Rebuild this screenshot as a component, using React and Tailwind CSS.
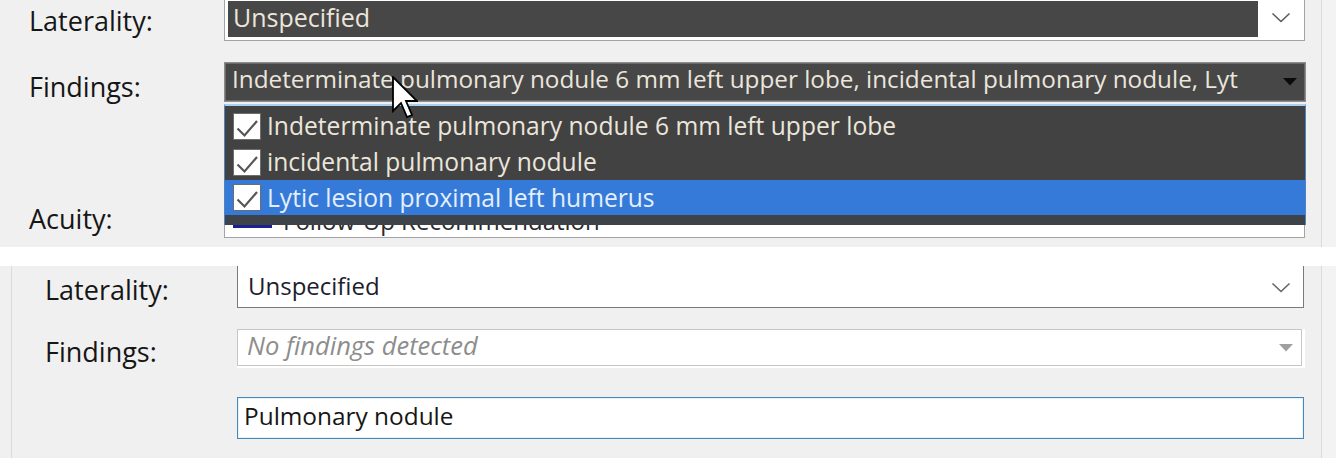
import React from "react";

const font = "font-['Open_Sans','Liberation_Sans',sans-serif]";

const Chevron = ({ color = "#5c5c5c" }) => (
  <svg width="20" height="11" viewBox="0 0 20 11">
    <path d="M1.5 1.5 L10 9.5 L18.5 1.5" fill="none" stroke={color} strokeWidth="1.6" />
  </svg>
);

const Triangle = ({ color }) => (
  <svg width="14" height="8" viewBox="0 0 14 8">
    <path d="M0 0 H14 L7 7.5 Z" fill={color} />
  </svg>
);

const CheckBox = () => (
  <div className="w-[28px] h-[27px] bg-white border border-[#6d6d6d] shrink-0 flex items-center justify-center">
    <svg width="26" height="25" viewBox="0 0 26 25">
      <path d="M3.5 14.5 L10.5 21.5 L23 7" fill="none" stroke="#555555" strokeWidth="2.2" />
    </svg>
  </div>
);

const Cursor = () => (
  <svg
    className="absolute left-[392px] top-[76px]"
    width="26"
    height="46"
    viewBox="0 0 13 23"
  >
    <path
      d="M0.5 0.5 L0.5 17.5 L4.5 13.5 L7.5 20.5 L10 19.5 L7 12.5 L12.5 12.5 Z"
      fill="#ffffff"
      stroke="#000000"
      strokeWidth="0.9"
      strokeLinejoin="miter"
    />
  </svg>
);

const findings = [
  "Indeterminate pulmonary nodule 6 mm left upper lobe",
  "incidental pulmonary nodule",
  "Lytic lesion proximal left humerus",
];

const label = "text-[27px] leading-[30px] text-[#161616]";

const TopPanel = () => (
  <div className="flex h-[247px]">
    <div className="relative w-[1322px] bg-[#f0f0f0] border-r border-[#dadada] overflow-hidden">
      {/* Laterality */}
      <div className="flex -mt-[3px] h-[44px]">
        <div className={"w-[224px] pl-[29px] pt-[9px] " + label}>Laterality:</div>
        <div className="w-[1081px] h-[44px] bg-white border border-[#a3a3a3] p-[3px] flex">
          <div className="w-[1030px] bg-[#474747] pl-[5px] pt-[1px] text-[25px] leading-[30px] text-[#ebe6dc]">
            Unspecified
          </div>
          <div className="flex-1 flex items-center justify-center pb-[4px] pl-[3px]">
            <Chevron />
          </div>
        </div>
      </div>

      {/* Findings */}
      <div className="flex mt-[21px] h-[40px]">
        <div className={"w-[224px] pl-[29px] pt-[10px] " + label}>Findings:</div>
        <div className="w-[1082px] h-[40px] bg-[#474747] border border-[#8c8c8c] shadow-[inset_0_0_0_1px_#6b6b6b] flex">
          <div className="flex-1 pl-[7px] pt-[1px] text-[24.3px] leading-[30px] text-[#ebe6dc] whitespace-nowrap overflow-hidden">
            Indeterminate pulmonary nodule 6 mm left upper lobe, incidental pulmonary nodule, Lyt
          </div>
          <div className="w-[30px] flex items-center justify-center">
            <Triangle color="#0a0a0a" />
          </div>
        </div>
      </div>

      {/* Acuity */}
      <div className="flex mt-[93px] h-[43px]">
        <div className={"w-[224px] pl-[29px] pt-[9px] " + label}>Acuity:</div>
        <div className="w-[1081px] h-[43px] bg-white border border-[#a3a3a3] flex items-start">
          <div className="ml-[8px] mt-[18px] w-[39px] h-[14px] bg-[#1b1f8f]" />
          <div className="ml-[11px] mt-[10px] text-[24px] leading-[30px] text-[#2a2a2a]">Follow-Up Recommendation</div>
        </div>
      </div>

      {/* open list of findings */}
      <div className="absolute left-[224px] top-[104px] w-[1082px] h-[121px] bg-[#424242] border-t-2 border-x border-t-[#a9d0ee] border-x-[#4f86c0] flex flex-col">
        <div className="h-[2px]" />
        {findings.map((f, i) => (
          <div
            key={f}
            className={
              "flex items-center gap-[6px] pl-[8px] " +
              (i === 2 ? "h-[35px] bg-[#357ad8] text-[#e4effd]" : "h-[36px] text-[#ebe6dc]")
            }
          >
            <CheckBox />
            <span className="text-[24.6px] leading-[30px] whitespace-nowrap">{f}</span>
          </div>
        ))}
        <div className="flex-1 bg-[#3d4349]" />
      </div>

      <Cursor />
    </div>
    <div className="flex-1 bg-[#f3f3f3]" />
  </div>
);

const BottomPanel = () => (
  <div className="flex h-[192px]">
    <div className="w-[12px] bg-[#f0f0f0] border-r border-[#dadada]" />
    <div className="w-[1310px] bg-[#f0f0f0] border-r border-[#dadada] overflow-hidden">
      {/* Laterality */}
      <div className="flex -mt-[2px] h-[44px]">
        <div className={"w-[225px] pl-[33px] pt-[11px] " + label}>Laterality:</div>
        <div className="w-[1067px] h-[44px] bg-white border border-[#7a7a7a] flex">
          <div className="flex-1 pl-[10px] pt-[6px] text-[24px] leading-[30px] text-[#221c2c]">Unspecified</div>
          <div className="w-[44px] flex items-center justify-center pt-[2px]">
            <Chevron color="#666666" />
          </div>
        </div>
      </div>

      {/* Findings (disabled) */}
      <div className="flex mt-[21px] h-[37px]">
        <div className={"w-[225px] pl-[33px] pt-[8px] " + label}>Findings:</div>
        <div className="w-[1068px] h-[39px] border-r-[3px] border-b-[2px] border-white">
          <div className="w-[1065px] h-[37px] bg-white border border-[#c6c6c6] flex">
            <div className="flex-1 pl-[9px] text-[25.5px] leading-[30px] italic text-[#8d8d8d]">No findings detected</div>
            <div className="w-[30px] flex items-center justify-center">
              <Triangle color="#a0a0a0" />
            </div>
          </div>
        </div>
      </div>

      {/* free text */}
      <div className="flex mt-[31px] h-[42px]">
        <div className="w-[225px]" />
        <div className="w-[1067px] h-[42px] bg-white border border-[#4a86b8] shadow-[inset_0_0_0_1px_#e3f4fb] pl-[6px] pt-[3px] text-[24.4px] leading-[30px] text-[#161616]">
          Pulmonary nodule
        </div>
      </div>
    </div>
    <div className="flex-1 bg-[#f3f3f3]" />
  </div>
);

export default function App() {
  return (
    <div className={"w-[1336px] h-[458px] bg-white overflow-hidden " + font}>
      <TopPanel />
      <div className="h-[19px] bg-white" />
      <BottomPanel />
    </div>
  );
}
